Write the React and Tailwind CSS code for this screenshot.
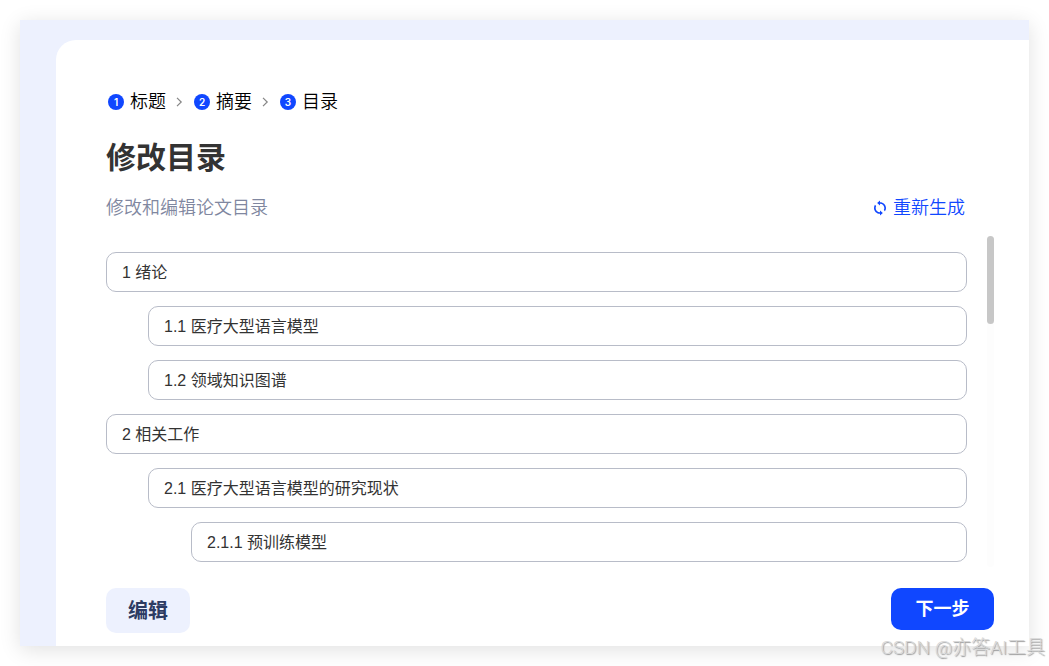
import { Fragment } from "react";

const steps = ["标题", "摘要", "目录"];

const outline = [
  { level: 1, text: "1 绪论" },
  { level: 2, text: "1.1 医疗大型语言模型" },
  { level: 2, text: "1.2 领域知识图谱" },
  { level: 1, text: "2 相关工作" },
  { level: 2, text: "2.1 医疗大型语言模型的研究现状" },
  { level: 3, text: "2.1.1 预训练模型" },
];

const indents = { 1: "ml-0", 2: "ml-[42px]", 3: "ml-[85px]" };

function Chevron() {
  return (
    <svg aria-hidden="true" className="mx-2 h-[10px] w-[10px]" viewBox="0 0 10 10" fill="none" stroke="#858585" strokeWidth="1.2">
      <path d="M3 0.8 7.2 5 3 9.2" />
    </svg>
  );
}

function RefreshIcon() {
  return (
    <svg aria-hidden="true" className="h-[18px] w-[18px]" viewBox="0 0 24 24" fill="currentColor">
      <path d="M12 4.2V2L8.2 5.2l3.8 3.4V6.2c3.31 0 5.8 2.69 5.8 5.8 0 1.01-.25 1.97-.7 2.8l1.46 1.46C19.54 15.03 20 13.57 20 12c0-4.42-3.58-7.8-8-7.8zm0 13.6c-3.31 0-5.8-2.49-5.8-5.8 0-1.01.25-1.97.7-2.8L5.24 7.74C4.46 8.97 4 10.43 4 12c0 4.42 3.58 7.8 8 7.8V22l3.8-3.2-3.8-3.4v2.4z" />
    </svg>
  );
}

export default function App() {
  return (
    <div className="relative flex min-h-screen flex-col bg-white p-5 font-['Liberation_Sans','Noto_Sans_CJK_SC',sans-serif]">
      <div className="flex flex-col bg-[#edf1fe] pt-5 pl-9 shadow-[0_4px_20px_rgba(0,0,0,0.12)]">
        <main className="flex flex-col rounded-tl-[20px] bg-white pt-12 pr-[35px] pb-[13px] pl-[50px]">
          <ol className="flex h-7 items-center text-lg leading-7 font-[350] text-black">
            {steps.map((label, i) => (
              <Fragment key={label}>
                <li className="flex items-center gap-[6px] pl-[2px]">
                  <span className="flex h-4 w-4 items-center justify-center rounded-full bg-[#1047ff] font-['Inter',sans-serif] text-[10px] leading-4 font-semibold text-white">
                    {i + 1}
                  </span>
                  {label}
                </li>
                {i < steps.length - 1 && (
                  <li aria-hidden="true">
                    <Chevron />
                  </li>
                )}
              </Fragment>
            ))}
          </ol>
          <h1 className="mt-5 text-[30px] leading-[44px] font-bold text-[#333]">修改目录</h1>
          <div className="mt-[14px] flex items-center justify-between pr-[29px] text-lg leading-7 font-[350]">
            <p className="text-[#8087a0]">修改和编辑论文目录</p>
            <button type="button" className="flex items-center gap-1 text-[#1047ff]">
              <RefreshIcon />
              重新生成
            </button>
          </div>
          <div className="mt-[14px] flex gap-5">
            <ul className="flex flex-1 flex-col gap-[14px] pt-4 pb-[5px]">
              {outline.map((item) => (
                <li key={item.text} className="flex">
                  <input
                    type="text"
                    aria-label={item.text}
                    defaultValue={item.text}
                    className={`h-10 min-w-0 flex-1 rounded-[10px] border border-[#b8bcc8] bg-white px-[15px] pb-[3px] text-base text-[#333] ${indents[item.level]}`}
                  />
                </li>
              ))}
            </ul>
            <div aria-hidden="true" className="w-[7px] rounded-full bg-[#fdfdfd]">
              <div className="h-[88px] rounded-full bg-[#c7c7c7]" />
            </div>
          </div>
          <div className="mt-[21px] flex items-start justify-between">
            <button type="button" className="h-[45px] rounded-[10px] bg-[#edf1fe] px-[22px] text-xl font-bold text-[#2c3b63]">
              编辑
            </button>
            <button type="button" className="h-[42px] w-[103px] rounded-[10px] bg-[#1047ff] text-lg font-bold text-white">
              下一步
            </button>
          </div>
        </main>
      </div>
      <span className="absolute right-1 bottom-1 font-['Roboto','Noto_Sans_CJK_SC',sans-serif] text-[19px] leading-7 font-light text-[#d8d8d8] [text-shadow:1px_1px_1px_#999]">
        CSDN @亦答AI工具
      </span>
    </div>
  );
}
